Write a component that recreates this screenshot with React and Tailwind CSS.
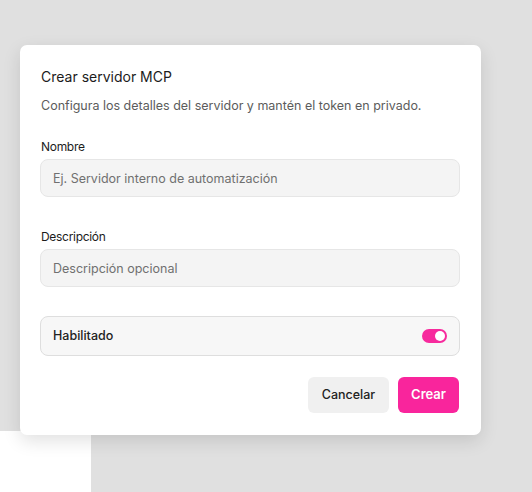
import React, { useState } from "react";

const App = () => {
  const [enabled, setEnabled] = useState(true);

  return (
    <div
      className="relative w-[532px] h-[492px] bg-[#e0e0e0] pt-[45px] pl-5 overflow-hidden"
      style={{ fontFamily: "Inter, 'Noto Sans', sans-serif" }}
    >
      {/* Dialog */}
      <div className="relative z-10 w-[461px] rounded-[7px] bg-white pl-5 pr-[21px] pt-[22px] pb-[22px] shadow-[0_6px_18px_rgba(0,0,0,0.12)]">
        <h2 className="pl-px text-sm leading-5 text-[#1c1c1c]">Crear servidor MCP</h2>
        <p className="mt-[9px] pl-px text-[12.5px] leading-5 text-[#5c5c5c]">
          Configura los detalles del servidor y mantén el token en privado.
        </p>

        <label className="mt-[23px] block pl-px text-xs leading-4 tracking-tight text-[#1c1c1c]">Nombre</label>
        <input
          type="text"
          placeholder="Ej. Servidor interno de automatización"
          className="mt-1 block h-[38px] w-full rounded-lg border border-[#e6e6e6] bg-[#f4f4f4] px-3 text-[12.5px] text-[#333] placeholder:text-[#707070] outline-none"
        />

        <label className="mt-[32px] block pl-px text-xs leading-4 tracking-tight text-[#1c1c1c]">Descripción</label>
        <input
          type="text"
          placeholder="Descripción opcional"
          className="mt-1 block h-[38px] w-full rounded-lg border border-[#e6e6e6] bg-[#f4f4f4] px-3 text-[12.5px] text-[#333] placeholder:text-[#707070] outline-none"
        />

        {/* Enabled switch */}
        <div className="mt-[29px] flex h-10 items-center justify-between rounded-lg border border-[#dedede] bg-[#f7f7f7] pl-3 pr-3">
          <span className="text-[12.5px] font-medium text-[#222]">Habilitado</span>
          <button
            onClick={() => setEnabled(!enabled)}
            className={`flex h-[14px] w-[25px] items-center rounded-full px-[2px] ${enabled ? "justify-end bg-[#f72a9d]" : "justify-start bg-[#ccc]"}`}
          >
            <span className="h-[10px] w-[10px] rounded-full bg-white" />
          </button>
        </div>

        <div className="mt-[21px] flex justify-end gap-[9px] pr-px">
          <button className="h-9 w-[81px] rounded-md bg-[#f0f0f0] text-[12.5px] font-medium text-[#222]">Cancelar</button>
          <button className="h-9 w-[61px] rounded-md bg-[#f9259c] text-[13px] font-semibold text-white">Crear</button>
        </div>
      </div>

      {/* stray white patch bottom-left */}
      <div className="absolute left-0 top-[431px] h-[61px] w-[91px] bg-white" />
    </div>
  );
};

export default App;
